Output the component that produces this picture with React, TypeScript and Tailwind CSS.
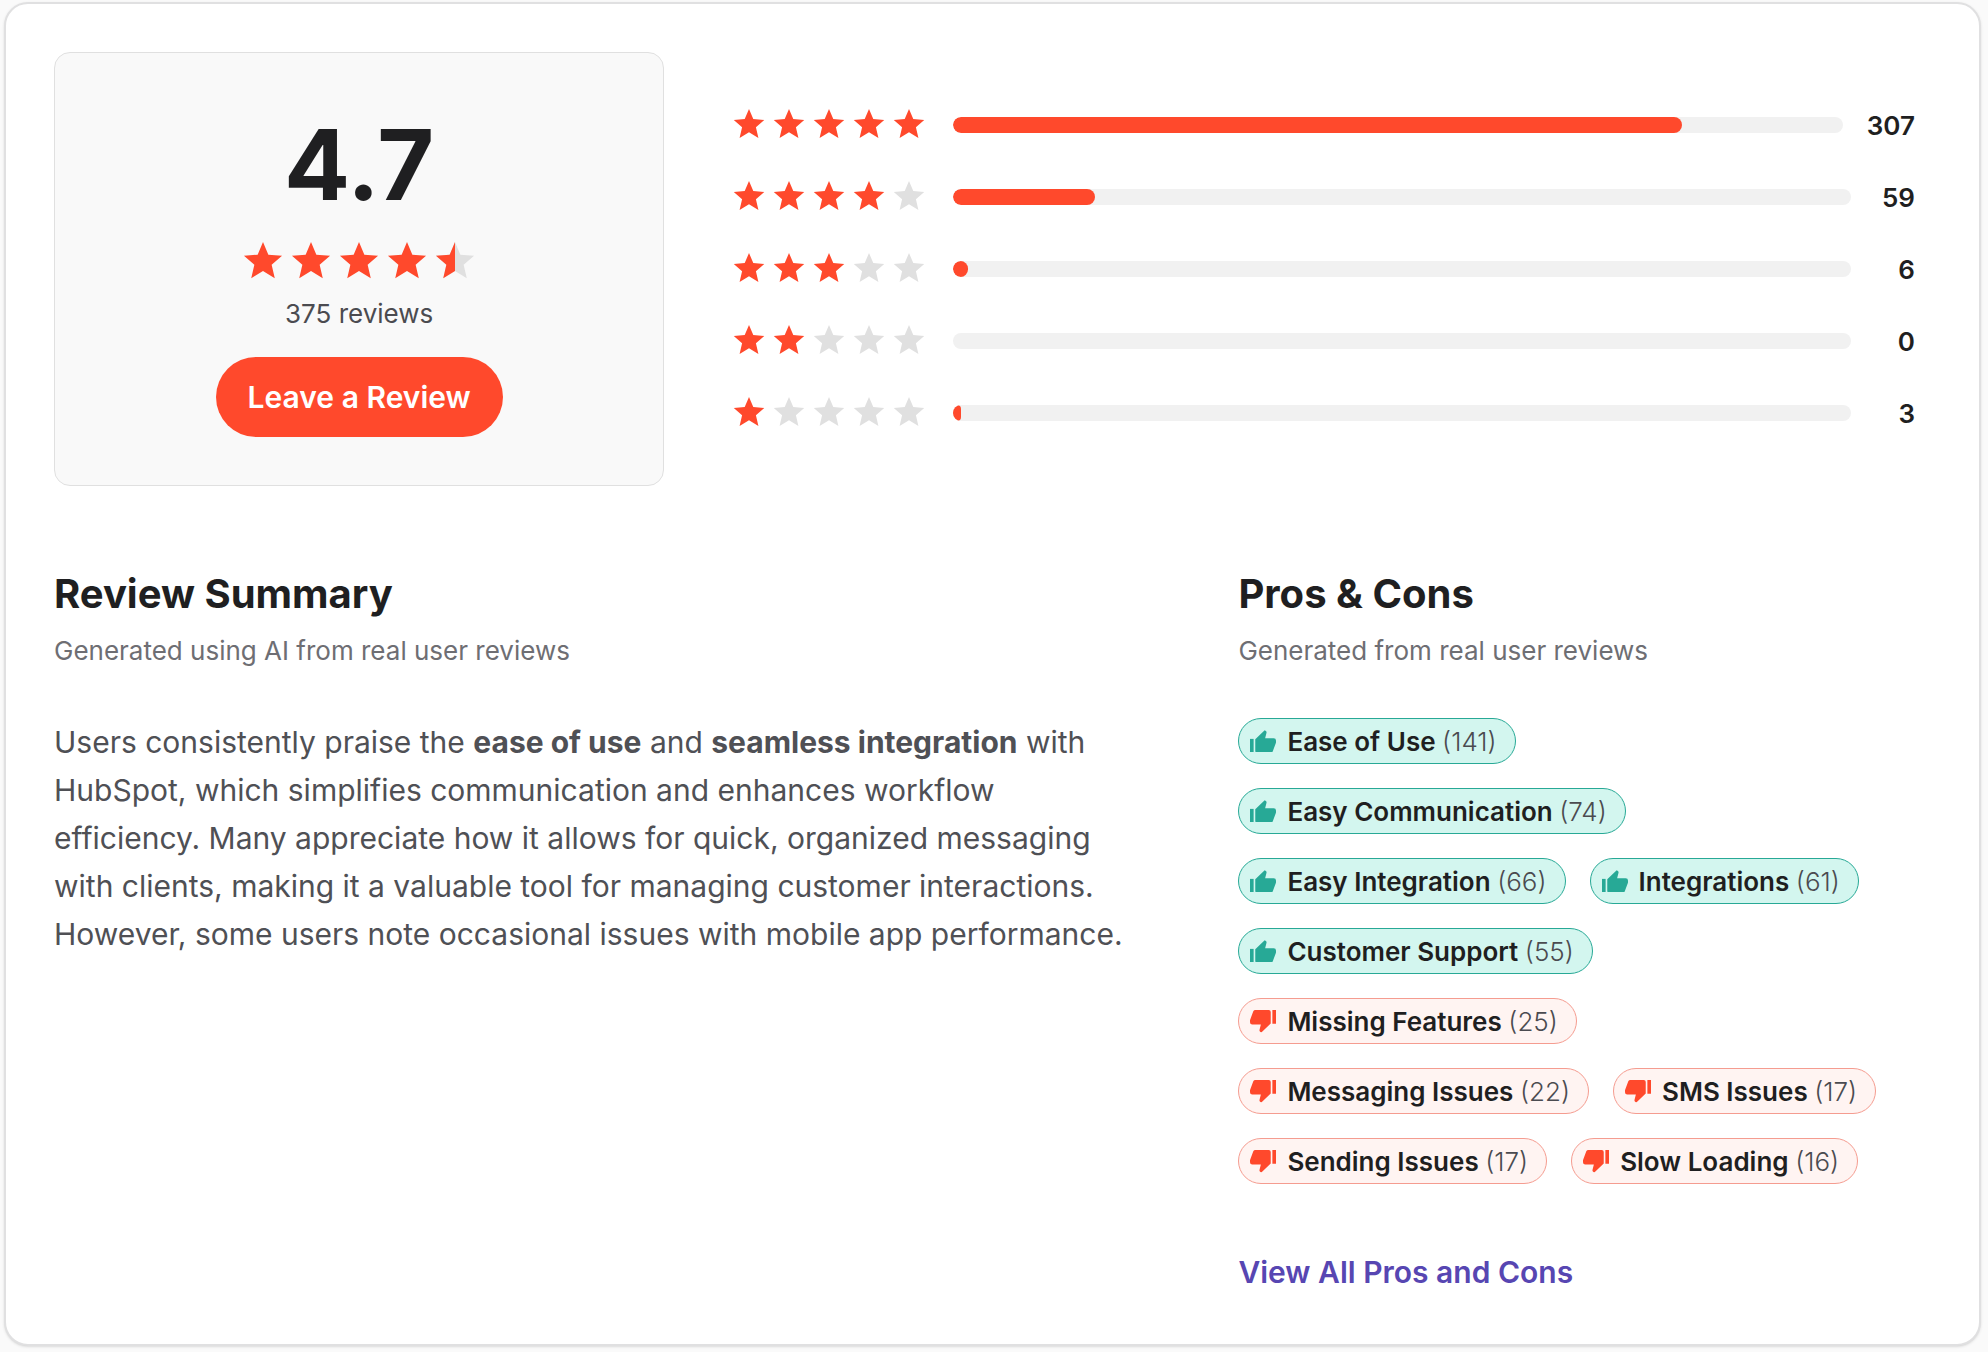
import React, { FC } from "react";

type Tag = { label: string; count: number; kind: "pro" | "con" };

const ratings = [
    { stars: 5, count: 307 },
    { stars: 4, count: 59 },
    { stars: 3, count: 6 },
    { stars: 2, count: 0 },
    { stars: 1, count: 3 },
];

const total = ratings.reduce((sum, r) => sum + r.count, 0);

const tags: Tag[] = [
    { label: "Ease of Use", count: 141, kind: "pro" },
    { label: "Easy Communication", count: 74, kind: "pro" },
    { label: "Easy Integration", count: 66, kind: "pro" },
    { label: "Integrations", count: 61, kind: "pro" },
    { label: "Customer Support", count: 55, kind: "pro" },
    { label: "Missing Features", count: 25, kind: "con" },
    { label: "Messaging Issues", count: 22, kind: "con" },
    { label: "SMS Issues", count: 17, kind: "con" },
    { label: "Sending Issues", count: 17, kind: "con" },
    { label: "Slow Loading", count: 16, kind: "con" },
];

const STAR = "M12 17.27 18.18 21l-1.64-7.03L22 9.24l-7.19-.61L12 2 9.19 8.63 2 9.24l5.46 4.73L5.82 21z";
const HALF_STAR = "M12 2 9.19 8.63 2 9.24l5.46 4.73L5.82 21 12 17.27z";

const Star: FC<{ fill: "full" | "half" | "empty"; className: string }> = ({ fill, className }) => (
    <svg viewBox="1.5 2 21 21" className={className} aria-hidden="true">
        <path d={STAR} fill={fill === "full" ? "#ff492c" : "#e0e0e0"} />
        {fill === "half" && <path d={HALF_STAR} fill="#ff492c" />}
    </svg>
);

const Thumb: FC<{ down?: boolean }> = ({ down }) => (
    <svg
        viewBox="0 0 79 69"
        className={down ? "w-[26px] shrink-0 rotate-180 text-[#ff492c]" : "w-[26px] shrink-0 text-[#27a996]"}
        fill="currentColor"
        aria-hidden="true"
    >
        <path d="M0 27h11v42H0z" />
        <path d="M16 28 43 2q2-2 4 0l2 2q2 2 1 5l-4 16h26q7 0 7 7v5q0 2-1 4l-9 24q-2 4-6 4H22q-6 0-6-6z" />
    </svg>
);

const Pill: FC<{ tag: Tag }> = ({ tag }) => (
    <li>
        <a
            href="#"
            className={
                tag.kind === "pro"
                    ? "flex h-[46px] items-center gap-[11px] rounded-full border border-[#27a996] bg-[#d3f6ef] pl-[11px] pr-[18px] text-[26px] text-[#1f1f21]"
                    : "flex h-[46px] items-center gap-[11px] rounded-full border border-[#f59c90] bg-[#fff4f2] pl-[11px] pr-[18px] text-[26px] text-[#1f1f21]"
            }
        >
            <Thumb down={tag.kind === "con"} />
            <span className="whitespace-nowrap font-semibold">
                {tag.label} <span className="font-light text-[#4b4b50]">({tag.count})</span>
            </span>
        </a>
    </li>
);

const App = () => {
    return (
        <div className="min-h-screen bg-[#fafafa] pt-0.5 pr-[7px] pb-1.5 pl-1 font-['Inter',sans-serif] text-[#1f1f21]">
            <main className="rounded-3xl border-2 border-[#e0e0e1] bg-white p-12 shadow-sm">
                <section className="grid grid-cols-[1fr_2fr] gap-[46px]">
                    <div className="flex flex-col items-center rounded-2xl border border-[#e0e0e0] bg-[#f9f9f9] p-12">
                        <p className="text-[98px] leading-[128px] font-bold">4.7</p>
                        <div className="mt-[13px] flex gap-2" role="img" aria-label="4.7 out of 5 stars">
                            {[1, 2, 3, 4, 5].map((n) => (
                                <Star key={n} fill={n < 5 ? "full" : "half"} className="size-10" />
                            ))}
                        </div>
                        <p className="mt-3 text-[26px] leading-10 text-[#4b4b50]">{total} reviews</p>
                        <button type="button" className="mt-[23px] h-20 rounded-full bg-[#ff492c] px-8 text-[30px] font-semibold text-white">
                            Leave a Review
                        </button>
                    </div>
                    <ul className="flex flex-col justify-center gap-10 pr-4 pl-[23px]">
                        {ratings.map((r) => (
                            <li key={r.stars} className="flex h-8 items-center gap-6">
                                <div className="mr-1 flex shrink-0 gap-2" role="img" aria-label={`${r.stars} stars`}>
                                    {[1, 2, 3, 4, 5].map((n) => (
                                        <Star key={n} fill={n <= r.stars ? "full" : "empty"} className="size-8" />
                                    ))}
                                </div>
                                <div className="h-4 flex-1 overflow-hidden rounded-full bg-[#f1f1f1]">
                                    <div className="h-full rounded-full bg-[#ff492c]" style={{ width: `${(r.count / total) * 100}%` }} />
                                </div>
                                <span className="min-w-10 text-right text-[26px] font-semibold">{r.count}</span>
                            </li>
                        ))}
                    </ul>
                </section>

                <div className="mt-21 flex gap-24">
                    <section className="flex-1">
                        <h2 className="text-[40px] leading-12 font-bold">Review Summary</h2>
                        <p className="mt-[15px] text-[26px] leading-9 text-[#6e6e73]">Generated using AI from real user reviews</p>
                        <p className="mt-[49px] text-[30px] leading-12 text-[#4f5055]">
                            Users consistently praise the <b className="font-bold">ease of use</b> and{" "}
                            <b className="font-bold">seamless integration</b> with HubSpot, which simplifies communication and
                            enhances workflow efficiency. Many appreciate how it allows for quick, organized messaging with
                            clients, making it a valuable tool for managing customer interactions. However, some users note
                            occasional issues with mobile app performance.
                        </p>
                    </section>
                    <section className="w-[36.9%] shrink-0">
                        <h2 className="text-[40px] leading-12 font-bold">Pros &amp; Cons</h2>
                        <p className="mt-[15px] text-[26px] leading-9 text-[#6e6e73]">Generated from real user reviews</p>
                        <ul className="mt-[49px] flex flex-wrap gap-6 pr-8">
                            {tags.map((tag) => (
                                <Pill key={tag.label} tag={tag} />
                            ))}
                        </ul>
                        <a href="#" className="mt-16 block text-[30px] leading-12 font-semibold text-[#5746b2]">
                            View All Pros and Cons
                        </a>
                    </section>
                </div>
            </main>
        </div>
    );
};

export default App;
